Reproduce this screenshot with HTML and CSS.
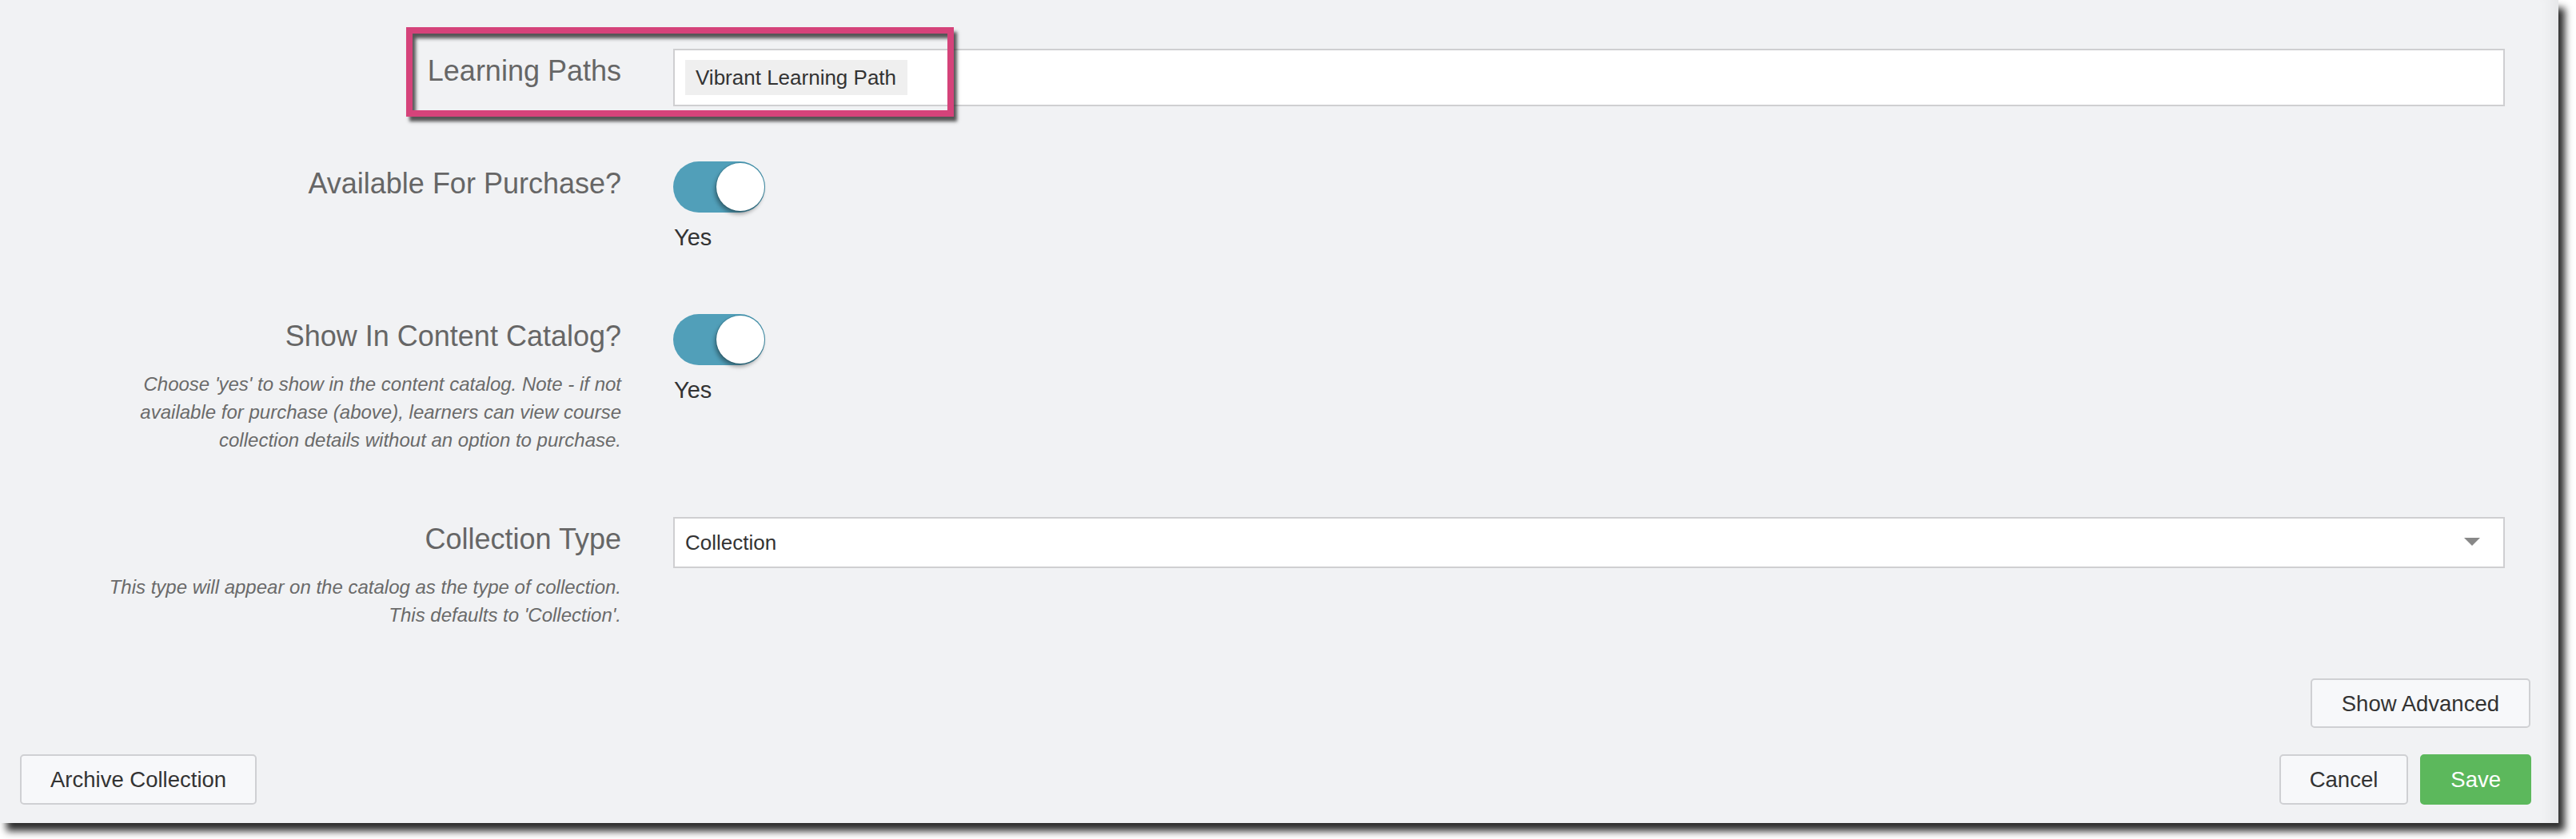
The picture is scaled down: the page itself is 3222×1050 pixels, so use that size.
FILE: index.html
```html
<!DOCTYPE html>
<html lang="en">
<head>
<meta charset="utf-8">
<title>Edit Collection</title>
<link rel="stylesheet" href="styles.css">
</head>
<body>
<div class="window">
  <form class="form">
    <div class="row row-paths">
      <div class="label-col"><label class="label">Learning Paths</label></div>
      <div class="control">
        <div class="tag-input"><span class="tag">Vibrant Learning Path</span></div>
      </div>
    </div>

    <div class="row row-purchase">
      <div class="label-col"><label class="label">Available For Purchase?</label></div>
      <div class="control">
        <span class="switch"><span class="knob"></span></span>
        <div class="switch-text">Yes</div>
      </div>
    </div>

    <div class="row row-catalog">
      <div class="label-col">
        <label class="label">Show In Content Catalog?</label>
        <p class="help">Choose 'yes' to show in the content catalog. Note - if not available for purchase (above), learners can view course collection details without an option to purchase.</p>
      </div>
      <div class="control">
        <span class="switch"><span class="knob"></span></span>
        <div class="switch-text">Yes</div>
      </div>
    </div>

    <div class="row row-type">
      <div class="label-col">
        <label class="label">Collection Type</label>
        <p class="help">This type will appear on the catalog as the type of collection. This defaults to 'Collection'.</p>
      </div>
      <div class="control">
        <div class="select"><span class="select-value">Collection</span><span class="caret"></span></div>
      </div>
    </div>
  </form>

  <div class="advanced-row">
    <button type="button" class="btn">Show Advanced</button>
  </div>

  <div class="footer">
    <button type="button" class="btn">Archive Collection</button>
    <div class="footer-right">
      <button type="button" class="btn">Cancel</button>
      <button type="button" class="btn btn-save">Save</button>
    </div>
  </div>

  <div class="highlight"></div>
</div>
</body>
</html>
```

FILE: styles.css
```css
html, body {
  margin: 0;
  padding: 0;
  background: #ffffff;
}

body {
  width: 3222px;
  height: 1050px;
  overflow: hidden;
  font-family: "Liberation Sans", Arial, Helvetica, sans-serif;
  color: #333333;
}

.window {
  position: relative;
  width: 3200px;
  height: 1030px;
  box-sizing: border-box;
  background: #f1f2f4;
  box-shadow: 8px 10px 9px rgba(0, 0, 0, 0.82), inset -22px 0 18px -14px rgba(0, 0, 0, 0.05);
  display: flex;
  flex-direction: column;
}

.form {
  padding-top: 61px;
}

.row {
  display: grid;
  grid-template-columns: 720px 2291px;
  column-gap: 65px;
  padding-left: 57px;
  align-items: start;
}

.row-paths { margin-bottom: 69px; }
.row-purchase { margin-bottom: 75px; }
.row-catalog { margin-bottom: 79px; }
.row-type { margin-bottom: 0; }

.label-col {
  display: flex;
  flex-direction: column;
  align-items: flex-end;
  text-align: right;
}

.label {
  display: block;
  padding-top: 2px;
  font-size: 36px;
  line-height: 51px;
  color: #666666;
}

.help {
  margin: 17px 0 0 0;
  max-width: 665px;
  font-size: 24px;
  line-height: 35px;
  font-style: italic;
  color: #6a6a6a;
}

/* Learning paths tag input */
.tag-input {
  box-sizing: border-box;
  height: 72px;
  border: 2px solid #cfcfd1;
  background: #ffffff;
  padding: 12px 13px;
  display: flex;
  align-items: center;
}

.tag {
  display: inline-block;
  height: 44px;
  line-height: 44px;
  padding: 0 14px 0 13px;
  background: #efefef;
  font-size: 26px;
  color: #333333;
}

/* Toggle switch */
.switch {
  box-sizing: border-box;
  display: flex;
  justify-content: flex-end;
  align-items: center;
  width: 115px;
  height: 64px;
  padding: 0 1px;
  border-radius: 32px;
  background: #519fb9;
}

.knob {
  width: 60px;
  height: 60px;
  border-radius: 50%;
  background: #ffffff;
  box-shadow: -2px 4px 5px rgba(0, 0, 0, 0.35), 0 0 0 1px rgba(40, 110, 130, 0.35);
}

.switch-text {
  margin-top: 11px;
  padding-left: 1px;
  font-size: 29px;
  line-height: 41px;
  color: #333333;
}

/* Select */
.select {
  box-sizing: border-box;
  height: 64px;
  border: 2px solid #cfcfd1;
  background: #ffffff;
  padding: 0 29px 0 13px;
  display: flex;
  align-items: center;
  justify-content: space-between;
}

.select-value {
  font-size: 26px;
  color: #333333;
}

.caret {
  width: 0;
  height: 0;
  border-left: 10px solid transparent;
  border-right: 10px solid transparent;
  border-top: 10px solid #888888;
  margin-top: -2px;
}

/* Buttons */
.btn {
  box-sizing: border-box;
  height: 63px;
  margin: 0;
  padding: 10px 36px;
  border: 2px solid #cfd0d3;
  border-radius: 5px;
  background: #f7f8fa;
  font-family: "Liberation Sans", Arial, Helvetica, sans-serif;
  font-size: 27.5px;
  line-height: 39px;
  color: #333333;
  cursor: pointer;
}

.btn-save {
  background: #5cb85c;
  border-color: #5cb85c;
  color: #ffffff;
}

.advanced-row {
  margin-top: 62px;
  display: flex;
  justify-content: flex-end;
  padding-right: 35px;
}

.advanced-row .btn {
  height: 62px;
  padding: 10px 37px;
}

.footer {
  margin-top: 33px;
  display: flex;
  justify-content: space-between;
  align-items: center;
  padding: 0 34px 0 25px;
}

.footer-right {
  display: flex;
  gap: 15px;
}

/* Annotation overlay drawn on the screenshot */
.highlight {
  position: absolute;
  left: 508px;
  top: 34px;
  width: 685px;
  height: 112px;
  box-sizing: border-box;
  border: 8px solid #d5437a;
  box-shadow: 4px 6px 4px rgba(45, 45, 45, 0.8), inset 4px 6px 4px rgba(45, 45, 45, 0.8);
  pointer-events: none;
}
```
